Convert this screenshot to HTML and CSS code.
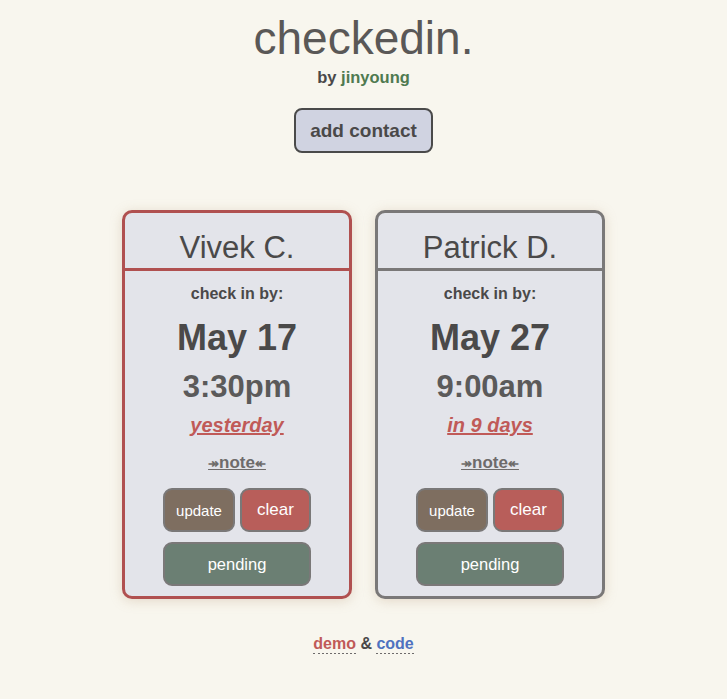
FILE: index.html
```html
<!DOCTYPE html>
<html>
<head>
<meta charset="utf-8">
<title>checkedin.</title>
<link rel="stylesheet" href="styles.css">
</head>
<body>
  <header class="top">
    <h1 class="title">checkedin.</h1>
    <p class="byline">by <a class="author" href="#">jinyoung</a></p>
    <button class="add-btn">add contact</button>
  </header>

  <main class="cards">
    <section class="card card-late">
      <div class="card-head">Vivek C.</div>
      <div class="card-body">
        <div class="label">check in by:</div>
        <div class="date">May 17</div>
        <div class="time">3:30pm</div>
        <a class="rel" href="#">yesterday</a>
        <a class="note" href="#"><span class="arr">↠</span>note<span class="arr">↞</span></a>
        <div class="actions">
          <button class="btn btn-update">update</button>
          <button class="btn btn-clear">clear</button>
          <button class="btn btn-pending">pending</button>
        </div>
      </div>
    </section>

    <section class="card card-ok">
      <div class="card-head">Patrick D.</div>
      <div class="card-body">
        <div class="label">check in by:</div>
        <div class="date">May 27</div>
        <div class="time">9:00am</div>
        <a class="rel" href="#">in 9 days</a>
        <a class="note" href="#"><span class="arr">↠</span>note<span class="arr">↞</span></a>
        <div class="actions">
          <button class="btn btn-update">update</button>
          <button class="btn btn-clear">clear</button>
          <button class="btn btn-pending">pending</button>
        </div>
      </div>
    </section>
  </main>

  <footer class="foot">
    <a class="demo" href="#">demo</a> &amp; <a class="code" href="#">code</a>
  </footer>
</body>
</html>
```

FILE: styles.css
```css
* { box-sizing: border-box; }

html, body {
  margin: 0;
  padding: 0;
  background: #f8f6ee;
}

body {
  font-family: "Liberation Sans", Arial, Helvetica, sans-serif;
  color: #4a4949;
  text-align: center;
}

.top {
  padding-top: 15px;
  display: flex;
  flex-direction: column;
  align-items: center;
}

.title {
  margin: 0;
  font-size: 46px;
  line-height: 46px;
  font-weight: normal;
  color: #5a5857;
}

.byline {
  margin: 6px 0 0;
  font-size: 16.5px;
  line-height: 20px;
  font-weight: bold;
  color: #4a4949;
}

.author {
  color: #4f7a50;
  text-decoration: none;
}

.add-btn {
  margin-top: 21px;
  width: 139px;
  height: 45px;
  border: 2px solid #4a4a4a;
  border-radius: 8px;
  background: #d0d3e1;
  color: #4a4949;
  font-family: inherit;
  font-size: 19px;
  font-weight: bold;
  padding: 0;
}

.cards {
  margin-top: 57px;
  display: flex;
  justify-content: center;
  gap: 23px;
}

.card {
  width: 230px;
  height: 389px;
  border: 3px solid #7a7878;
  border-radius: 10px;
  background: #e3e4ea;
  box-shadow: 0 2px 12px rgba(190, 160, 130, 0.35);
  display: flex;
  flex-direction: column;
}

.card-late { border-color: #b05050; }
.card-ok { border-color: #7a7878; }

.card-head {
  height: 58px;
  padding-top: 14px;
  font-size: 31px;
  line-height: 41px;
  color: #4a4949;
  border-bottom: 3px solid;
  border-color: inherit;
}

.card-body {
  display: flex;
  flex-direction: column;
  align-items: center;
  padding-top: 13px;
}

.label {
  font-size: 16px;
  line-height: 20px;
  font-weight: bold;
}

.date {
  margin-top: 14px;
  font-size: 36px;
  line-height: 40px;
  font-weight: bold;
  color: #4a4949;
}

.time {
  margin-top: 11px;
  font-size: 31px;
  line-height: 36px;
  font-weight: bold;
  color: #5b5a5a;
}

.rel {
  margin-top: 8px;
  font-size: 20px;
  line-height: 24px;
  font-weight: bold;
  font-style: italic;
  color: #c05a58;
  text-decoration: underline;
}

.note {
  margin-top: 15px;
  font-size: 17px;
  line-height: 22px;
  font-weight: bold;
  color: #6e6b6b;
  text-decoration: underline;
}

.arr {
  font-size: 13px;
}

.actions {
  margin-top: 13px;
  width: 148px;
  display: grid;
  grid-template-columns: 72px 71px;
  column-gap: 5px;
  row-gap: 10px;
}

.btn {
  height: 44px;
  border: 2px solid #7a7878;
  border-radius: 9px;
  color: #ffffff;
  font-family: inherit;
  font-size: 17px;
  padding: 0;
}

.btn-update {
  background: #7e6e60;
  font-size: 15px;
}

.btn-clear {
  background: #b85e5a;
}

.btn-pending {
  grid-column: 1 / span 2;
  background: #6b7f73;
  font-size: 16.5px;
}

.foot {
  margin-top: 35px;
  font-size: 16px;
  line-height: 20px;
  font-weight: bold;
  color: #4a4949;
}

.foot a {
  text-decoration: none;
  border-bottom: 2px dotted #6e6b6b;
  padding-bottom: 1px;
}

.demo { color: #c05a58; }
.code { color: #4f72c0; }
```
